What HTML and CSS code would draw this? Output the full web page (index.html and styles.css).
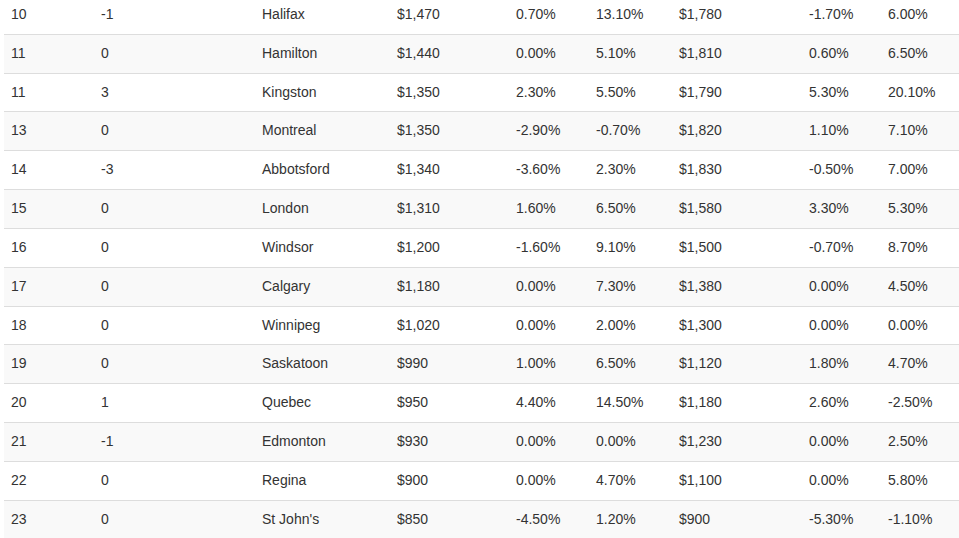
FILE: index.html
```html
<!DOCTYPE html>
<html>
<head>
<meta charset="utf-8">
<link rel="stylesheet" href="styles.css">
</head>
<body>
<div class="wrap">
<table class="rank">
<colgroup>
<col class="c1"><col class="c2"><col class="c3"><col class="c4"><col class="c5"><col class="c6"><col class="c7"><col class="c8"><col class="c9">
</colgroup>
<tbody>
<tr><td>10</td><td>-1</td><td>Halifax</td><td>$1,470</td><td>0.70%</td><td>13.10%</td><td>$1,780</td><td>-1.70%</td><td>6.00%</td></tr>
<tr><td>11</td><td>0</td><td>Hamilton</td><td>$1,440</td><td>0.00%</td><td>5.10%</td><td>$1,810</td><td>0.60%</td><td>6.50%</td></tr>
<tr><td>11</td><td>3</td><td>Kingston</td><td>$1,350</td><td>2.30%</td><td>5.50%</td><td>$1,790</td><td>5.30%</td><td>20.10%</td></tr>
<tr><td>13</td><td>0</td><td>Montreal</td><td>$1,350</td><td>-2.90%</td><td>-0.70%</td><td>$1,820</td><td>1.10%</td><td>7.10%</td></tr>
<tr><td>14</td><td>-3</td><td>Abbotsford</td><td>$1,340</td><td>-3.60%</td><td>2.30%</td><td>$1,830</td><td>-0.50%</td><td>7.00%</td></tr>
<tr><td>15</td><td>0</td><td>London</td><td>$1,310</td><td>1.60%</td><td>6.50%</td><td>$1,580</td><td>3.30%</td><td>5.30%</td></tr>
<tr><td>16</td><td>0</td><td>Windsor</td><td>$1,200</td><td>-1.60%</td><td>9.10%</td><td>$1,500</td><td>-0.70%</td><td>8.70%</td></tr>
<tr><td>17</td><td>0</td><td>Calgary</td><td>$1,180</td><td>0.00%</td><td>7.30%</td><td>$1,380</td><td>0.00%</td><td>4.50%</td></tr>
<tr><td>18</td><td>0</td><td>Winnipeg</td><td>$1,020</td><td>0.00%</td><td>2.00%</td><td>$1,300</td><td>0.00%</td><td>0.00%</td></tr>
<tr><td>19</td><td>0</td><td>Saskatoon</td><td>$990</td><td>1.00%</td><td>6.50%</td><td>$1,120</td><td>1.80%</td><td>4.70%</td></tr>
<tr><td>20</td><td>1</td><td>Quebec</td><td>$950</td><td>4.40%</td><td>14.50%</td><td>$1,180</td><td>2.60%</td><td>-2.50%</td></tr>
<tr><td>21</td><td>-1</td><td>Edmonton</td><td>$930</td><td>0.00%</td><td>0.00%</td><td>$1,230</td><td>0.00%</td><td>2.50%</td></tr>
<tr><td>22</td><td>0</td><td>Regina</td><td>$900</td><td>0.00%</td><td>4.70%</td><td>$1,100</td><td>0.00%</td><td>5.80%</td></tr>
<tr><td>23</td><td>0</td><td>St John's</td><td>$850</td><td>-4.50%</td><td>1.20%</td><td>$900</td><td>-5.30%</td><td>-1.10%</td></tr>
</tbody>
</table>
</div>
</body>
</html>
```

FILE: styles.css
```css
html, body {
  margin: 0;
  padding: 0;
  background: #fff;
  overflow: hidden;
}
.wrap {
  padding-left: 4px;
  margin-top: -5px;
}
.rank {
  width: 955px;
  table-layout: fixed;
  border-collapse: collapse;
  border-spacing: 0;
  font-family: "Liberation Sans", Arial, sans-serif;
  font-size: 14px;
  color: #333;
}
.c1 { width: 90px; }
.c2 { width: 161px; }
.c3 { width: 135px; }
.c4 { width: 119px; }
.c5 { width: 80px; }
.c6 { width: 83px; }
.c7 { width: 130px; }
.c8 { width: 79px; }
.c9 { width: 78px; }
.rank td {
  padding: 8px 8px 8px 7px;
  line-height: 21.83px;
  border-top: 1px solid #ddd;
  text-align: left;
  vertical-align: top;
  white-space: nowrap;
}
.rank tr:nth-child(even) td {
  background: #f9f9f9;
}
```
